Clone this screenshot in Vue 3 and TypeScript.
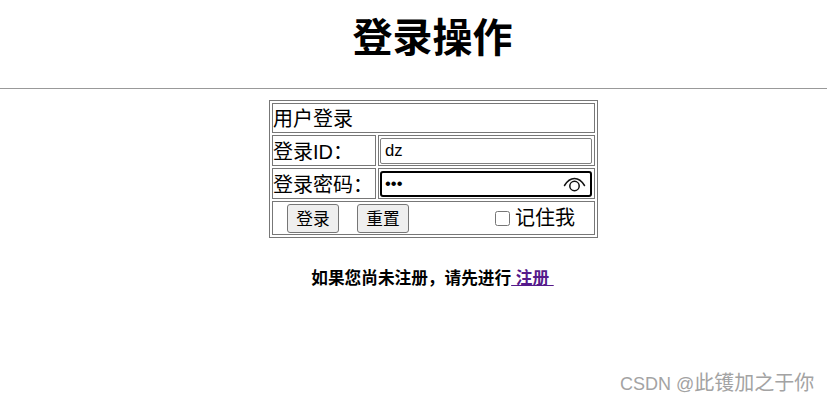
<script setup lang="ts">
const title = '登录操作'
</script>

<template>
  <div class="page">
    <h1 class="title">{{ title }}</h1>
    <hr class="rule" />
    <div class="center">
      <table class="login">
        <tbody>
          <tr class="r1"><td colspan="2">用户登录</td></tr>
          <tr class="r2">
            <td class="label">登录ID：</td>
            <td class="field"><input class="inp" type="text" value="dz" /></td>
          </tr>
          <tr class="r3">
            <td class="label">登录密码：</td>
            <td class="field">
              <div class="pw">
                <input class="inp focus" type="password" value="abc" />
                <svg class="eye" width="24" height="16" viewBox="0 0 24 16" fill="none" stroke="#111" stroke-width="1.5">
                  <path d="M1.5 8.5C4.5 3.5 8 1.5 11.5 1.5s7 2 10 7" stroke-linecap="round" />
                  <circle cx="11.5" cy="9" r="4.7" />
                </svg>
              </div>
            </td>
          </tr>
          <tr class="r4">
            <td colspan="2">
              <div class="actions">
                <button class="btn" type="button">登录</button>
                <button class="btn" type="button">重置</button>
                <label class="remember"><input class="check" type="checkbox" /><span>记住我</span></label>
              </div>
            </td>
          </tr>
        </tbody>
      </table>
      <p class="hint">如果您尚未注册，请先进行<a class="link" href="#">&nbsp;注册&nbsp;</a></p>
    </div>
    <div class="mark"><span class="latin">CSDN @</span>此镬加之于你</div>
  </div>
</template>

<style>
html, body { margin: 0; overflow: hidden; background: #fff; }
</style>

<style scoped>
.page {
  position: relative;
  width: 827px;
  height: 401px;
  overflow: hidden;
  font-family: "Liberation Sans", "Noto Sans CJK SC", sans-serif;
  color: #000;
}
.title {
  margin: 0;
  height: 80px;
  padding-left: 38px;
  font-size: 40px;
  line-height: 76px;
  font-weight: 700;
  text-align: center;
}
.rule {
  margin: 8px 0 0;
  height: 1px;
  border: 0;
  background: #999;
}
.center {
  padding-left: 40px;
  display: flex;
  flex-direction: column;
  align-items: center;
}
.login {
  margin-top: 11px;
  width: 329px;
  border: 1px solid #777;
  border-spacing: 2px;
  border-collapse: separate;
  font-size: 20px;
}
.login td {
  border: 1px solid #777;
  padding: 0;
  line-height: 24px;
}
.r1 td, .r2 .label, .r3 .label { padding-top: 2px; }
.r1 td { height: 26px; }
.r2 .label, .r3 .label { height: 27px; }
.r4 td { height: 32px; }
.label { width: 102px; white-space: nowrap; }
.field { padding: 0 1px !important; }
.inp {
  display: block;
  box-sizing: border-box;
  width: 212px;
  height: 26px;
  margin: 0;
  padding: 0 4px;
  border: 1px solid #808080;
  border-radius: 2px;
  font-family: "Liberation Sans", sans-serif;
  font-size: 16.67px;
  color: #000;
  background: #fff;
  outline: none;
}
.focus { border: 2px solid #000; border-radius: 3px; padding: 0 3px; }
.pw { position: relative; }
.eye { position: absolute; right: 6px; top: 6px; }
.actions {
  display: flex;
  align-items: center;
  gap: 18px;
  padding: 0 19px 0 14px;
}
.btn {
  box-sizing: border-box;
  width: 52px;
  height: 29px;
  padding: 0;
  border: 1px solid #767676;
  border-radius: 3px;
  background: #efefef;
  color: #000;
  font-family: "Liberation Sans", "Noto Sans CJK SC", sans-serif;
  font-size: 16.67px;
}
.remember { margin-left: auto; display: flex; align-items: center; gap: 5px; }
.check { width: 15px; height: 15px; margin: 0; }
.hint {
  margin: 29px 2px 0 0;
  font-size: 16.67px;
  line-height: 24px;
  font-weight: 700;
}
.link { color: #551a8b; text-decoration: underline; }
.mark {
  position: absolute;
  left: 620px;
  top: 369px;
  font-size: 20px;
  line-height: 28px;
  color: #a3a3a3;
  white-space: nowrap;
}
.latin { font-size: 18px; }
</style>
